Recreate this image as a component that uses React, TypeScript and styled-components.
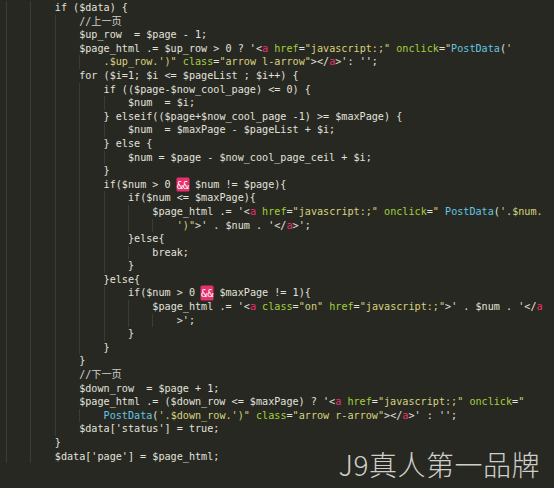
import React from "react";
import styled, { createGlobalStyle } from "styled-components";

const GlobalStyle = createGlobalStyle`
  html, body {
    margin: 0;
    padding: 0;
    background: #272822;
  }
`;

type Kind = "p" | "c" | "s" | "g" | "t" | "f" | "h";
type Tok = [Kind, string];
type Line = { indent: number; toks: Tok[] };

const colors: Record<Kind, string> = {
  p: "#e2e2dc",
  c: "#d2d2ca",
  s: "#d9d27c",
  g: "#a4d03c",
  t: "#ec2f6c",
  f: "#62c6e0",
  h: "#ffffff",
};

const Editor = styled.div`
  position: relative;
  width: 554px;
  height: 488px;
  overflow: hidden;
  background: #272822;
  box-sizing: border-box;
  padding: 1px 0 0 6px;
  font-family: "DejaVu Sans Mono", "Noto Sans CJK SC", monospace;
  font-size: 10.13px;
`;

const Row = styled.div`
  display: flex;
  height: 13.6px;
  line-height: 13.6px;
  white-space: pre;
`;

const Guide = styled.span`
  flex: none;
  box-shadow: inset 1px 0 0 #3c3b34;
`;

const Token = styled.span<{ $kind: Kind }>`
  color: ${(p) => colors[p.$kind]};
  ${(p) =>
    p.$kind === "h"
      ? `background: #e8306c; border-radius: 1px; padding: 1px 0; box-shadow: 0 0 0 0.5px #e8306c;`
      : ""}
  ${(p) => (p.$kind === "c" ? `font-family: "DejaVu Sans Mono", "Noto Sans CJK SC", monospace;` : "")}
`;

const Watermark = styled.div`
  position: absolute;
  right: 14px;
  bottom: 8px;
  font-family: "Noto Sans CJK SC", sans-serif;
  font-weight: 300;
  font-size: 28px;
  letter-spacing: 0.5px;
  color: #cfcfca;
  line-height: 32px;
`;

const P = (s: string): Tok => ["p", s];
const S = (s: string): Tok => ["s", s];
const G = (s: string): Tok => ["g", s];
const T = (s: string): Tok => ["t", s];
const F = (s: string): Tok => ["f", s];
const H = (s: string): Tok => ["h", s];
const C = (s: string): Tok => ["c", s];

const lines: Line[] = [
  { indent: 8, toks: [P("if ($data) {")] },
  { indent: 12, toks: [C("//上一页")] },
  { indent: 12, toks: [P("$up_row  = $page - 1;")] },
  {
    indent: 12,
    toks: [
      P("$page_html .= $up_row > 0 ? '<"),
      T("a"),
      P(" "),
      G("href"),
      P("="),
      S('"javascript:;"'),
      P(" "),
      G("onclick"),
      P("="),
      S('"'),
      F("PostData"),
      P("("),
      S("'"),
    ],
  },
  {
    indent: 16,
    toks: [
      S(".$up_row.')\""),
      P(" "),
      G("class"),
      P("="),
      S('"arrow l-arrow"'),
      P("></"),
      T("a"),
      P(">': '';"),
    ],
  },
  { indent: 12, toks: [P("for ($i=1; $i <= $pageList ; $i++) {")] },
  { indent: 16, toks: [P("if (($page-$now_cool_page) <= 0) {")] },
  { indent: 20, toks: [P("$num  = $i;")] },
  { indent: 16, toks: [P("} elseif(($page+$now_cool_page -1) >= $maxPage) {")] },
  { indent: 20, toks: [P("$num  = $maxPage - $pageList + $i;")] },
  { indent: 16, toks: [P("} else {")] },
  { indent: 20, toks: [P("$num = $page - $now_cool_page_ceil + $i;")] },
  { indent: 16, toks: [P("}")] },
  { indent: 16, toks: [P("if($num > 0 "), H("&&"), P(" $num != $page){")] },
  { indent: 20, toks: [P("if($num <= $maxPage){")] },
  {
    indent: 24,
    toks: [
      P("$page_html .= '<"),
      T("a"),
      P(" "),
      G("href"),
      P("="),
      S('"javascript:;"'),
      P(" "),
      G("onclick"),
      P("="),
      S('" '),
      F("PostData"),
      P("("),
      S("'.$num."),
    ],
  },
  { indent: 28, toks: [S("')\""), P(">' . $num . '</"), T("a"), P(">';")] },
  { indent: 20, toks: [P("}else{")] },
  { indent: 24, toks: [P("break;")] },
  { indent: 20, toks: [P("}")] },
  { indent: 16, toks: [P("}else{")] },
  { indent: 20, toks: [P("if($num > 0 "), H("&&"), P(" $maxPage != 1){")] },
  {
    indent: 24,
    toks: [
      P("$page_html .= '<"),
      T("a"),
      P(" "),
      G("class"),
      P("="),
      S('"on"'),
      P(" "),
      G("href"),
      P("="),
      S('"javascript:;"'),
      P(">' . $num . '</"),
      T("a"),
    ],
  },
  { indent: 28, toks: [P(">';")] },
  { indent: 20, toks: [P("}")] },
  { indent: 16, toks: [P("}")] },
  { indent: 12, toks: [P("}")] },
  { indent: 12, toks: [C("//下一页")] },
  { indent: 12, toks: [P("$down_row  = $page + 1;")] },
  {
    indent: 12,
    toks: [
      P("$page_html .= ($down_row <= $maxPage) ? '<"),
      T("a"),
      P(" "),
      G("href"),
      P("="),
      S('"javascript:;"'),
      P(" "),
      G("onclick"),
      P("="),
      S('"'),
    ],
  },
  {
    indent: 16,
    toks: [
      F("PostData"),
      P("("),
      S("'.$down_row.')\""),
      P(" "),
      G("class"),
      P("="),
      S('"arrow r-arrow"'),
      P("></"),
      T("a"),
      P(">' : '';"),
    ],
  },
  { indent: 12, toks: [P("$data['status'] = true;")] },
  { indent: 8, toks: [P("}")] },
  { indent: 8, toks: [P("$data['page'] = $page_html;")] },
];

export default function App() {
  return (
    <>
      <GlobalStyle />
      <Editor>
        {lines.map((line, i) => (
          <Row key={i}>
            {Array.from({ length: line.indent / 4 }).map((_, j) => (
              <Guide key={j}>{"    "}</Guide>
            ))}
            {line.toks.map(([k, s], j) => (
              <Token key={j} $kind={k}>
                {s}
              </Token>
            ))}
          </Row>
        ))}
        <Watermark>J9真人第一品牌</Watermark>
      </Editor>
    </>
  );
}
